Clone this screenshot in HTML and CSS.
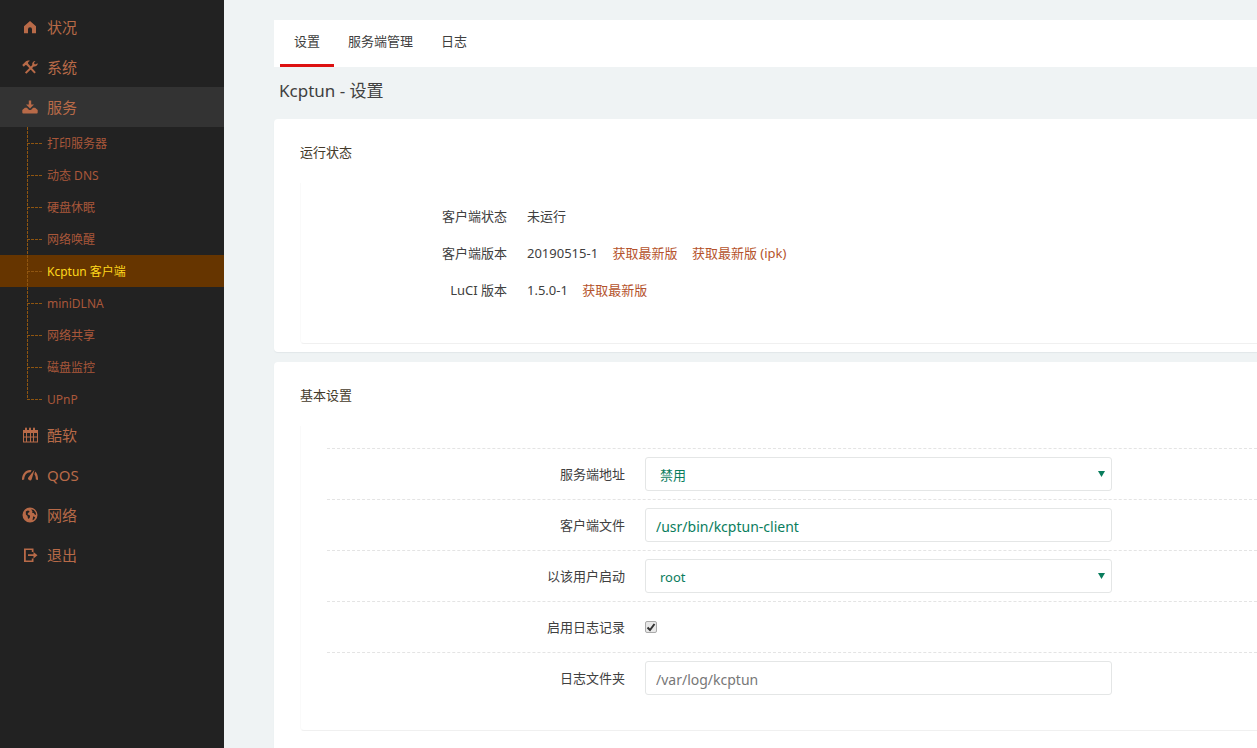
FILE: index.html
```html
<!DOCTYPE html>
<html lang="zh-CN">
<head>
<meta charset="utf-8">
<meta name="viewport" content="width=device-width, initial-scale=1">
<title>Kcptun - 设置</title>
<link rel="stylesheet" href="styles.css">
</head>
<body>
<div class="page">
  <nav class="sidebar" aria-label="主菜单">
    <ul class="menu">
      <li><a class="menu-link" href="#status">
        <svg class="icon" viewBox="0 0 16 16" aria-hidden="true"><path d="M8 2 14 7.200v7H10v-4a2 2 0 0 0-4 0v4H2v-7z"/></svg>状况</a></li>
      <li><a class="menu-link" href="#system">
        <svg class="icon" viewBox="0 0 16 16" aria-hidden="true"><path d="M.2 6 4 2.200C5.400 1.300 7 1.400 8 1.900 6.800 2.300 6.200 3 6 3.900l.2.900 7.600 8.500-1.400 1.300L4.600 6.300l-1.100-.2-1.700 1.700zM15.700 4.200a3.200 3.200 0 0 1-4 3.300L4.400 14.800 2.900 13.400 10.300 6.100a3.200 3.200 0 0 1 3.200-4.200l-1.700 2.200 1.200 1.500z"/></svg>系统</a></li>
      <li><a class="menu-link menu-link-open" href="#services">
        <svg class="icon" viewBox="0 0 16 16" aria-hidden="true"><path d="M6.800 1.500h2.400v4H12L8 9.500l-4-4h2.800z"/><path d="M2.900 8.800h2l1.400 1.400a2.400 2.400 0 0 0 3.400 0l1.400-1.400h2l2.600 2.300v2.400a1 1 0 0 1-1 1H1.300a1 1 0 0 1-1-1v-2.400z"/></svg>服务</a>
        <ul class="submenu">
          <li><a class="submenu-link" href="#printer">打印服务器</a></li>
          <li><a class="submenu-link" href="#ddns">动态 DNS</a></li>
          <li><a class="submenu-link" href="#hdidle">硬盘休眠</a></li>
          <li><a class="submenu-link" href="#wol">网络唤醒</a></li>
          <li><a class="submenu-link submenu-link-active" href="#kcptun" aria-current="page">Kcptun 客户端</a></li>
          <li><a class="submenu-link" href="#minidlna">miniDLNA</a></li>
          <li><a class="submenu-link" href="#samba">网络共享</a></li>
          <li><a class="submenu-link" href="#monitor">磁盘监控</a></li>
          <li><a class="submenu-link submenu-link-last" href="#upnp">UPnP</a></li>
        </ul>
      </li>
      <li><a class="menu-link" href="#koolsoft">
        <svg class="icon" viewBox="0 0 16 16" aria-hidden="true"><path fill-rule="evenodd" d="M1 3h2V1.500a1 1 0 0 1 2 0V3h2V1.500a1 1 0 0 1 2 0V3h2V1.500a1 1 0 0 1 2 0V3h3v12.500H1zM2 6v3.500h2V6zm3 0v3.500h3V6zm4 0v3.500h2V6zm3 0v3.500h3V6zM2 10.500v4h2v-4zm3 0v4h3v-4zm4 0v4h2v-4zm3 0v4h3v-4z"/></svg>酷软</a></li>
      <li><a class="menu-link" href="#qos">
        <svg class="icon" viewBox="0 0 16 16" aria-hidden="true"><path d="M0 13C-.2 7.500 3.200 3.200 8 3.100l1.600.2-1.100 1.900C4.800 5 2.300 8.200 2.200 12.500zM12.500 2.800 9.700 12.200a1.900 1.900 0 1 1-3.200-2zM13.200 4.600C15.200 6.400 16.200 9.500 16 13l-2.200-.5c.1-2.100-.4-4-1.400-5.200z"/></svg>QOS</a></li>
      <li><a class="menu-link" href="#network">
        <svg class="icon" viewBox="0 0 16 16" aria-hidden="true"><path fill-rule="evenodd" d="M8 .5a7.500 7.500 0 1 0 0 15 7.500 7.500 0 0 0 0-15zM3.800 4.600l2-1.200 1.700.5-.3 1.300-1.300.8-.2 1.500 2 .8.4 1.700-1.200 1.800-.9-.4-.5-2.300-1.600-1.500zM9.200 2.200l2.600.9 2 2.700.2 2.200-1.300-.4-1-1.600-1.500.1.300-1.700zM11.200 9.300l2 .9-1.200 2.300-1.500.7z"/></svg>网络</a></li>
      <li><a class="menu-link" href="#logout">
        <svg class="icon" viewBox="0 0 16 16" aria-hidden="true"><path d="M2 1.500h9.500V5H9.800V3H3.800v10.500h6v-2h1.700V15H2zM6 7.300h5.500V5L15.500 8.200l-4 3.200V9.100H6z"/></svg>退出</a></li>
    </ul>
  </nav>

  <main class="content">
    <nav class="tabs" aria-label="页面">
      <a class="tab tab-active" href="#settings" aria-current="page">设置</a>
      <a class="tab" href="#servers">服务端管理</a>
      <a class="tab" href="#log">日志</a>
    </nav>
    <h1 class="title">Kcptun - 设置</h1>

    <section class="card">
      <h2 class="card-title">运行状态</h2>
      <dl class="panel status">
        <div class="status-row"><dt>客户端状态</dt><dd>未运行</dd></div>
        <div class="status-row"><dt>客户端版本</dt><dd>20190515-1 <a href="#client">获取最新版</a> <a href="#client-ipk">获取最新版 (ipk)</a></dd></div>
        <div class="status-row"><dt>LuCI 版本</dt><dd>1.5.0-1 <a href="#luci">获取最新版</a></dd></div>
      </dl>
    </section>

    <section class="card card-last">
      <h2 class="card-title">基本设置</h2>
      <form class="panel form">
        <div class="form-row">
          <label for="server">服务端地址</label>
          <select class="field field-select" id="server"><option>禁用</option></select>
        </div>
        <div class="form-row">
          <label for="client-file">客户端文件</label>
          <input class="field" id="client-file" type="text" value="/usr/bin/kcptun-client">
        </div>
        <div class="form-row">
          <label for="user">以该用户启动</label>
          <select class="field field-select" id="user"><option>root</option></select>
        </div>
        <div class="form-row">
          <label for="logging">启用日志记录</label>
          <input class="check" id="logging" type="checkbox" checked>
        </div>
        <div class="form-row">
          <label for="log-folder">日志文件夹</label>
          <input class="field" id="log-folder" type="text" placeholder="/var/log/kcptun">
        </div>
      </form>
    </section>
  </main>
</div>
</body>
</html>
```

FILE: styles.css
```css
* { box-sizing: border-box; }

body {
  margin: 0;
  background: #eff3f4;
  color: #404040;
  font: 13px/24px "Noto Sans", "Noto Sans CJK SC", sans-serif;
}

a { color: #b5532c; text-decoration: none; }
ul, dl, dd { margin: 0; padding: 0; list-style: none; }

.page { display: flex; min-height: 100vh; }

/* Sidebar */
.sidebar {
  flex: 0 0 224px;
  padding-top: 7px;
  background: #222;
}

.menu-link {
  display: flex;
  align-items: center;
  gap: 9px;
  height: 40px;
  padding-left: 22px;
  color: #b86a48;
  font-size: 15px;
}

.menu-link-open { background: #333; }

.icon { width: 16px; height: 16px; fill: currentColor; }

.submenu-link {
  display: flex;
  gap: 5px;
  height: 32px;
  padding-left: 27px;
  color: #a9573a;
  font-size: 12px;
  line-height: 34px;
}

.submenu-link::before {
  content: "";
  width: 15px;
  height: 32px;
  background:
    repeating-linear-gradient(to bottom, #8f5510 0 3px, transparent 3px 4px) 0 0 / 1px 100% no-repeat,
    repeating-linear-gradient(to right, #8f5510 0 3px, transparent 3px 4px) 0 16px / 15px 1px no-repeat;
}

.submenu-link-last::before {
  background-size: 1px 17px, 15px 1px;
}

.submenu-link-active { background: #663500; color: #ffd81c; }

/* Content */
.content {
  display: flex;
  flex: 1;
  flex-direction: column;
  min-width: 0;
  padding: 20px 0 0 50px;
}

.tabs {
  display: flex;
  height: 47px;
  padding-left: 6px;
  background: #fff;
}

.tab {
  padding: 9px 14px 0;
  border-bottom: 3px solid transparent;
  color: #404040;
}

.tab-active { border-bottom-color: #d11; }

.title {
  margin: 0;
  padding: 12px 5px 16px;
  font-size: 17px;
  font-weight: 400;
}

.card {
  margin-bottom: 10px;
  padding: 21px 0 8px 26px;
  border-radius: 4px 0 0 4px;
  background: #fff;
  box-shadow: 0 1px 1px #e2e7e9;
}

.card-last { flex: 1; margin-bottom: 0; border-radius: 4px 0 0 0; }

.card-title {
  margin: 0 0 19px;
  color: #443a2a;
  font-size: 13px;
  font-weight: 400;
}

.panel {
  border-bottom: 1px solid #f0f0f0;
  border-left: 1px solid #fafafa;
  border-radius: 0 0 0 4px;
}

.status { padding: 15px 0 34px; }

.status-row { display: flex; gap: 20px; line-height: 37px; }
.status-row dt { width: 206px; text-align: right; }
.status-row a { margin-left: 11px; }

.form { padding: 22px 0 27px 26px; }

.form-row {
  display: flex;
  align-items: center;
  gap: 20px;
  height: 51px;
  border-top: 1px dashed #e4e4e4;
}

.form-row label { flex: 0 0 298px; text-align: right; }

.field {
  flex: 0 1 467px;
  min-width: 0;
  height: 34px;
  padding: 2px 10px 0;
  border: 1px solid #e4e6e6;
  border-radius: 3px;
  background: #fff;
  color: #0a7d5d;
  font: inherit;
  font-size: 14px;
}

.field::placeholder { color: #777; opacity: 1; }

.field-select {
  padding-left: 14px;
  appearance: none;
  background: #fff url("data:image/svg+xml,%3Csvg xmlns='http://www.w3.org/2000/svg' width='7' height='6'%3E%3Cpath d='M0 0h7L3.500 6z' fill='%230a7d5d'/%3E%3C/svg%3E") right 6px top 13px no-repeat;
  font-size: 13px;
}

.check {
  width: 12px;
  height: 12px;
  margin: 0;
  border: 1px solid #aaa;
  border-radius: 2px;
  appearance: none;
  background: #e8e8e8;
}

.check:checked {
  background: #e8e8e8 url("data:image/svg+xml,%3Csvg xmlns='http://www.w3.org/2000/svg' width='10' height='10'%3E%3Cpath d='M1.500 5.500 4 8 8.500 2' fill='none' stroke='%23333' stroke-width='2'/%3E%3C/svg%3E") center no-repeat;
}
```
